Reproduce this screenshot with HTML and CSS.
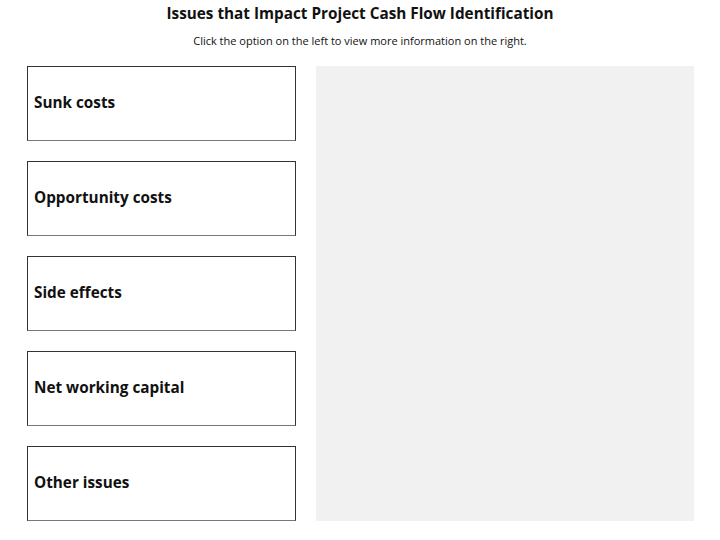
FILE: index.html
```html
<!DOCTYPE html>
<html>
<head>
<meta charset="utf-8">
<link rel="stylesheet" href="styles.css">
</head>
<body>
<div class="page">
  <h1 class="title">Issues that Impact Project Cash Flow Identification</h1>
  <p class="subtitle">Click the option on the left to view more information on the right.</p>
  <div class="main">
    <div class="options">
      <div class="option">Sunk costs</div>
      <div class="option">Opportunity costs</div>
      <div class="option">Side effects</div>
      <div class="option">Net working capital</div>
      <div class="option">Other issues</div>
    </div>
    <div class="panel"></div>
  </div>
</div>
</body>
</html>
```
FILE: styles.css
```css
html, body {
  margin: 0;
  padding: 0;
  background: #fff;
}
.page {
  width: 720px;
  height: 540px;
  font-family: "Open Sans", sans-serif;
  color: #111;
}
.title {
  margin: 0;
  padding-top: 2px;
  height: 22px;
  line-height: 22px;
  font-size: 15.3px;
  font-weight: 700;
  text-align: center;
}
.subtitle {
  margin: 0;
  margin-top: 6px;
  line-height: 22px;
  height: 22px;
  font-size: 11px;
  text-align: center;
}
.main {
  display: flex;
  gap: 20px;
  margin-top: 14px;
  padding-left: 27px;
}
.options {
  display: flex;
  flex-direction: column;
  gap: 20px;
  width: 269px;
}
.option {
  box-sizing: border-box;
  height: 75px;
  border: 1px solid #333;
  border-bottom-color: #777;
  display: flex;
  align-items: center;
  padding-left: 6px;
  font-size: 15.3px;
  font-weight: 700;
  padding-bottom: 3px;
}
.panel {
  width: 378px;
  height: 455px;
  background: #f1f1f1;
}
```
